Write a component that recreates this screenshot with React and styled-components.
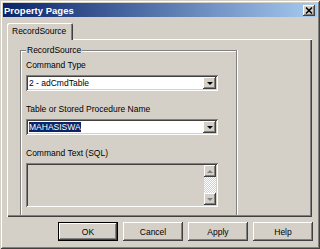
import React from "react"
import styled, { createGlobalStyle } from "styled-components"

const GlobalStyle = createGlobalStyle`
  html, body {
    margin: 0;
    padding: 0;
    background: #d4d0c8;
  }
  body {
    font-family: "Liberation Sans", Arial, sans-serif;
    font-size: 8.5px;
    color: #000;
  }
`

const raised = `
  box-shadow: inset -1px -1px #404040, inset 1px 1px #fff,
    inset -2px -2px #808080, inset 2px 2px #d4d0c8;
`

const sunken = `
  box-shadow: inset 1px 1px #808080, inset -1px -1px #fff,
    inset 2px 2px #404040, inset -2px -2px #d4d0c8;
`

const Window = styled.div`
  width: 320px;
  height: 249px;
  box-sizing: border-box;
  padding: 3px;
  background: #d4d0c8;
  box-shadow: inset 1px 1px #d4d0c8, inset -1px -1px #404040,
    inset 2px 2px #fff, inset -2px -2px #808080;
  display: flex;
  flex-direction: column;
`

const TitleBar = styled.div`
  height: 14px;
  display: flex;
  align-items: center;
  justify-content: space-between;
  padding: 0 2px 0 1px;
  background: linear-gradient(to right, #0a246a, #a6caf0);
  color: #fff;
  font-weight: bold;
  font-size: 9.5px;
`

const CloseButton = styled.div`
  width: 12px;
  height: 11px;
  background: #d4d0c8;
  display: flex;
  align-items: center;
  justify-content: center;
  ${raised}
`

const TabStrip = styled.div`
  display: flex;
  margin-top: 6px;
  padding-left: 4px;
  height: 16px;
`

const Tab = styled.div`
  position: relative;
  z-index: 1;
  width: 66px;
  height: 17px;
  box-sizing: border-box;
  padding: 3px 0 0 5px;
  background: #d4d0c8;
  border-radius: 2px 2px 0 0;
  box-shadow: inset 1px 1px #fff, inset -1px 0 #404040, inset -2px 0 #808080;
`

const Panel = styled.div`
  margin-left: 4px;
  width: 305px;
  height: 178px;
  box-sizing: border-box;
  padding: 11px 0 2px 13px;
  display: flex;
  box-shadow: inset 1px 1px #fff, inset -1px -1px #404040,
    inset -2px -2px #808080;
`

const GroupBox = styled.div`
  width: 217px;
  box-sizing: border-box;
  border: 1px solid #808080;
  border-bottom: none;
  padding: 0 5px;
  box-shadow: inset 1px 1px #fff, 1px 0 #fff;
  display: flex;
  flex-direction: column;
  align-items: flex-start;
`

const Legend = styled.div`
  margin: -6px 0 0 0;
  padding: 0 1px;
  line-height: 10px;
  background: #d4d0c8;
`

const Label = styled.div`
  line-height: 10px;
  margin-top: ${p => (p.first ? 5 : 13)}px;
`

const Combo = styled.div`
  margin-top: 5px;
  width: 192px;
  height: 16px;
  box-sizing: border-box;
  padding: 2px;
  background: #fff;
  display: flex;
  align-items: center;
  ${sunken}
`

const ComboText = styled.div`
  flex: 1;
  padding-left: 1px;
  line-height: 12px;
`

const Selected = styled.span`
  background: #0a246a;
  color: #fff;
`

const DropButton = styled.div`
  width: 13px;
  height: 12px;
  background: #d4d0c8;
  display: flex;
  align-items: center;
  justify-content: center;
  ${raised}
`

const Arrow = styled.div`
  width: 0;
  height: 0;
  border-left: 3px solid transparent;
  border-right: 3px solid transparent;
  border-${p => (p.up ? "bottom" : "top")}: 3px solid ${p => (p.disabled ? "#808080" : "#000")};
`

const TextArea = styled.div`
  margin-top: 5px;
  width: 192px;
  height: 44px;
  box-sizing: border-box;
  padding: 2px;
  background: #d4d0c8;
  display: flex;
  justify-content: flex-end;
  ${sunken}
`

const ScrollBar = styled.div`
  width: 12px;
  display: flex;
  flex-direction: column;
`

const ScrollButton = styled.div`
  height: 12px;
  background: #d4d0c8;
  display: flex;
  align-items: center;
  justify-content: center;
  ${raised}
`

const ScrollTrack = styled.div`
  flex: 1;
  background: repeating-conic-gradient(#fff 0 25%, #d4d0c8 0 50%) 0 0 / 2px 2px;
`

const ButtonRow = styled.div`
  margin-top: 5px;
  padding-right: 4px;
  display: flex;
  justify-content: flex-end;
  gap: 5px;
`

const Button = styled.div`
  width: 60px;
  height: 19px;
  box-sizing: border-box;
  display: flex;
  align-items: center;
  justify-content: center;
  background: #d4d0c8;
  box-shadow: ${p =>
    p.primary
      ? "inset 1px 1px #000, inset -1px -1px #000, inset -2px -2px #404040, inset 2px 2px #fff, inset -3px -3px #808080"
      : "inset -1px -1px #404040, inset 1px 1px #fff, inset -2px -2px #808080"};
`

export default function App() {
  return (
    <>
      <GlobalStyle />
      <Window>
        <TitleBar>
          <span>Property Pages</span>
          <CloseButton>
            <svg width="8" height="7" viewBox="0 0 8 7">
              <path d="M1 0.5 L7 6.5 M7 0.5 L1 6.5" stroke="#000" strokeWidth="1.5" />
            </svg>
          </CloseButton>
        </TitleBar>
        <TabStrip>
          <Tab>RecordSource</Tab>
        </TabStrip>
        <Panel>
          <GroupBox>
            <Legend>RecordSource</Legend>
            <Label first>Command Type</Label>
            <Combo>
              <ComboText>2 - adCmdTable</ComboText>
              <DropButton><Arrow /></DropButton>
            </Combo>
            <Label>Table or Stored Procedure Name</Label>
            <Combo>
              <ComboText><Selected>MAHASISWA</Selected></ComboText>
              <DropButton><Arrow /></DropButton>
            </Combo>
            <Label>Command Text (SQL)</Label>
            <TextArea>
              <ScrollBar>
                <ScrollButton><Arrow up disabled /></ScrollButton>
                <ScrollTrack />
                <ScrollButton><Arrow disabled /></ScrollButton>
              </ScrollBar>
            </TextArea>
          </GroupBox>
        </Panel>
        <ButtonRow>
          <Button primary>OK</Button>
          <Button>Cancel</Button>
          <Button>Apply</Button>
          <Button>Help</Button>
        </ButtonRow>
      </Window>
    </>
  )
}
